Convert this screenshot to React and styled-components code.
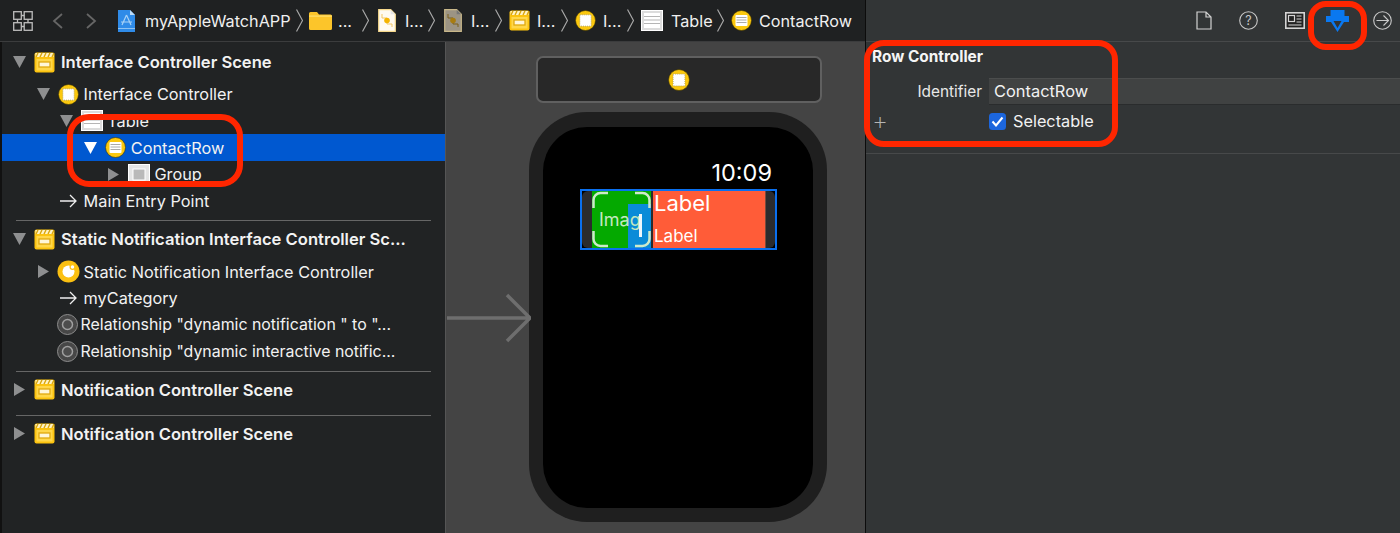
import React from "react";
import styled, { createGlobalStyle } from "styled-components";

const Global = createGlobalStyle`
  html, body { margin: 0; padding: 0; background: #1f2122; }
  * { box-sizing: border-box; }
  body { font-family: Inter, "Liberation Sans", sans-serif; color: #f2f2f2; -webkit-font-smoothing: antialiased; }
`;

const Page = styled.div`
  position: relative;
  width: 1400px;
  height: 533px;
  overflow: hidden;
  display: flex;
`;
const Editor = styled.div`
  width: 865px;
  display: flex;
  flex-direction: column;
`;
const Crumbs = styled.div`
  height: 42px;
  flex: none;
  display: flex;
  align-items: center;
  padding-left: 13px;
  background: #1f2122;
  border-bottom: 1px solid #3b3c3d;
`;
const CrumbSlot = styled.div`
  flex: none;
  display: flex;
  align-items: center;
  margin-left: ${(p) => p.$ml || 0}px;
`;
const CrumbLabel = styled.span`
  flex: none;
  display: block;
  width: ${(p) => p.$w}px;
  font-size: 16.2px;
  white-space: nowrap;
  color: #f0f0f0;
`;
const Main = styled.div`
  flex: 1;
  display: flex;
  min-height: 0;
`;
const Outline = styled.div`
  width: 446px;
  flex: none;
  background: #212324;
  border-left: 2px solid #111;
  border-right: 1px solid #555;
  padding-top: 7px;
`;
const Section = styled.div`
  padding-bottom: 6px;
`;
const Sep = styled.div`
  height: 1px;
  margin: 0 14px 5px 14px;
  background: #666;
`;
const Row = styled.div`
  height: ${(p) => (p.$scene ? 26 : 26.67)}px;
  margin-bottom: ${(p) => (p.$scene ? 6 : 0)}px;
  display: flex;
  align-items: center;
  padding-left: ${(p) => 11 + 23.6 * p.$level}px;
  background: ${(p) => (p.$selected ? "#0058d0" : "transparent")};
`;
const Disclosure = styled.div`
  width: 21px;
  flex: none;
  display: flex;
  align-items: center;
`;
const IconSlot = styled.div`
  width: 21px;
  height: 21px;
  flex: none;
  display: flex;
  align-items: center;
  justify-content: center;
  margin-left: ${(p) => p.$shift || 0}px;
  & > svg { flex: none; }
`;
const RowLabel = styled.span`
  margin-left: ${(p) => p.$gap ?? 6}px;
  font-size: ${(p) => (p.$scene ? 16.6 : p.$tight ? 15.9 : 16.3)}px;
  font-weight: ${(p) => (p.$scene ? 600 : 400)};
  white-space: nowrap;
  color: #f2f2f2;
`;
const Canvas = styled.div`
  position: relative;
  flex: 1;
  background: #444444;
  padding: 14px 0 0 90px;
`;
const SceneBar = styled.div`
  width: 286px;
  height: 47px;
  background: #282828;
  border: 2px solid #606060;
  border-radius: 7px;
  display: flex;
  align-items: center;
  justify-content: center;
`;
const Watch = styled.div`
  width: 298px;
  height: 410px;
  margin: 9px 0 0 -7px;
  padding: 15px 14px 14px;
  background: #1f1f1f;
  border-radius: 58px;
`;
const Screen = styled.div`
  height: 100%;
  background: #000;
  border-radius: 44px;
  padding-top: 32px;
  display: flex;
  flex-direction: column;
`;
const Time = styled.div`
  height: 28px;
  line-height: 28px;
  text-align: right;
  padding-right: 41px;
  font-size: 23.5px;
  font-weight: 400;
  color: #fff;
`;
const TableRow = styled.div`
  width: 197px;
  height: 61px;
  margin: 2px 0 0 37px;
  border: 2px solid #0a70f0;
`;
const RowGroup = styled.div`
  height: 100%;
  background: #2b2b2d;
  border-radius: 6px;
  display: flex;
  padding-left: 10px;
  gap: 2px;
`;
const ImageBox = styled.div`
  position: relative;
  width: 59px;
  height: 100%;
  background: #04a900;
  overflow: hidden;
  display: flex;
  align-items: center;
  padding-left: 7px;
`;
const ImageText = styled.span`
  position: relative;
  z-index: 2;
  font-size: 18px;
  color: #c4e8c0;
  white-space: nowrap;
`;
const Badge = styled.div`
  position: absolute;
  right: 0;
  bottom: 0;
  width: 23px;
  height: 44px;
  background: #0a8bd8;
`;
const Beam = styled.div`
  position: absolute;
  z-index: 3;
  right: 9px;
  top: 23px;
  width: 3px;
  height: 23px;
  background: #eef6fb;
`;
const Brackets = styled.svg`
  position: absolute;
  z-index: 4;
  inset: 0;
`;
const LabelBox = styled.div`
  width: 113px;
  height: 100%;
  background: #ff5c38;
  border-right: 1px solid #7a4a3c;
  display: flex;
  flex-direction: column;
  justify-content: space-between;
  padding-left: 1px;
`;
const BigLabel = styled.span`
  font-size: 22px;
  line-height: 25px;
  color: #fff;
`;
const SmallLabel = styled.span`
  font-size: 17px;
  line-height: 24px;
  color: #fff;
`;
const EntryArrow = styled.svg`
  position: absolute;
  left: 1px;
  top: 251px;
`;
const Inspector = styled.div`
  flex: 1;
  background: #323536;
  border-left: 1px solid #0c0c0c;
`;
const TabBar = styled.div`
  height: 42px;
  display: flex;
  align-items: center;
  justify-content: flex-end;
  padding-right: 8px;
  border-bottom: 1px solid #47494a;
`;
const Tab = styled.div`
  display: flex;
  margin-left: ${(p) => p.$ml}px;
`;
const InspectorSection = styled.div`
  height: 112px;
  border-bottom: 1px solid #47494a;
`;
const SectionTitle = styled.div`
  font-size: 15.4px;
  font-weight: 700;
  padding: 6px 0 0 6px;
  height: 36px;
  line-height: 17px;
  color: #f5f5f5;
`;
const FieldRow = styled.div`
  display: flex;
  align-items: center;
  height: 27px;
`;
const FieldLabel = styled.div`
  width: 116px;
  text-align: right;
  font-size: 15.4px;
  color: #e8e8e8;
`;
const FieldInput = styled.div`
  flex: 1;
  height: 27px;
  margin-left: 7px;
  background: #404242;
  border-top: 1px solid #4b4d4d;
  border-bottom: 1px solid #2a2c2d;
  padding-left: 5px;
  line-height: 25px;
  font-size: 16.4px;
  color: #f2f2f2;
`;
const CheckRow = styled.div`
  display: flex;
  align-items: center;
  height: 32px;
  padding-left: 6px;
`;
const Plus = styled.span`
  width: 117px;
  font-size: 25px;
  font-weight: 200;
  line-height: 20px;
  color: #b5b5b5;
`;
const Check = styled.div`
  width: 17px;
  height: 17px;
  flex: none;
  border-radius: 3.5px;
  background: #1c66dd;
  display: flex;
  align-items: center;
  justify-content: center;
`;
const CheckLabel = styled.span`
  margin-left: 7px;
  font-size: 16.3px;
  color: #f2f2f2;
`;
const RedBox = styled.div`
  position: absolute;
  left: ${(p) => p.$x}px;
  top: ${(p) => p.$y}px;
  width: ${(p) => p.$w}px;
  height: ${(p) => p.$h}px;
  border: 6px solid #ff2600;
  border-radius: ${(p) => p.$r}px;
  pointer-events: none;
`;

const Tri = ({ down, color = "#8e8f90" }) =>
  down ? (
    <svg width="13" height="12" viewBox="0 0 13 12"><path d="M0 0h13L6.5 12z" fill={color} /></svg>
  ) : (
    <svg width="12" height="13" viewBox="0 0 12 13"><path d="M1 0l11 6.5L1 13z" fill={color} /></svg>
  );

const Clapper = ({ s = 21 }) => (
  <svg width={s} height={s} viewBox="0 0 21 21">
    <rect x=".5" y=".5" width="20" height="20" rx="2" fill="#fcc30f" />
    <rect x="1.5" y="1" width="18" height="4" fill="#fff3c4" />
    <path d="M2 5l2-4M6 5l2-4M10 5l2-4M14 5l2-4M18 5l2-4" stroke="#d9a50c" strokeWidth="1.4" />
    <rect x="2.5" y="7" width="16" height="11.5" fill="#ffd74a" />
    <rect x="5" y="10" width="11" height="5" fill="#fff6d8" stroke="#e0a90e" strokeWidth="1.3" />
  </svg>
);
const Chip = ({ s = 21 }) => (
  <svg width={s} height={s} viewBox="0 0 21 21">
    <circle cx="10.5" cy="10.5" r="10" fill="#fbc80e" stroke="#3a3000" strokeWidth=".6" />
    <rect x="4.8" y="4.8" width="11.4" height="11.4" fill="#fff" stroke="#b9a65a" strokeWidth="1" strokeDasharray="1 1" />
  </svg>
);
const RowBadge = ({ s = 21 }) => (
  <svg width={s} height={s} viewBox="0 0 21 21">
    <circle cx="10.5" cy="10.5" r="10" fill="#fbc80e" stroke="#3a3000" strokeWidth=".6" />
    <rect x="4.5" y="5" width="12" height="11" rx="1" fill="#fff" />
    <path d="M5.5 7.5h10M5.5 10h10M5.5 12.5h10" stroke="#aaa" strokeWidth="1" />
  </svg>
);
const TableIcon = () => (
  <svg width="22" height="21" viewBox="0 0 22 21">
    <rect x=".5" y=".5" width="21" height="20" fill="#dcdcdc" stroke="#fff" />
    <rect x="3" y="3" width="16" height="15" fill="#fff" />
    <path d="M3 6.5h16M3 10h16M3 13.5h16" stroke="#b5b5b5" strokeWidth="1.2" />
  </svg>
);
const GroupIcon = () => (
  <svg width="22" height="21" viewBox="0 0 22 21">
    <rect x=".5" y=".5" width="21" height="20" fill="#e4e4e4" stroke="#fff" />
    <rect x="5" y="5" width="12" height="11" fill="#b9b9b9" stroke="#fff" />
  </svg>
);
const Relationship = () => (
  <svg width="21" height="21" viewBox="0 0 21 21">
    <circle cx="10.5" cy="10.5" r="10" fill="#474747" stroke="#8c8c8c" strokeWidth="1" />
    <circle cx="10.5" cy="10.5" r="5" fill="#4d4d4d" stroke="#a0a0a0" strokeWidth="1.5" />
  </svg>
);
const Notify = () => (
  <svg width="23" height="23" viewBox="0 0 23 23">
    <circle cx="11.5" cy="11.5" r="11" fill="#fbc011" />
    <circle cx="11.5" cy="11.5" r="6" fill="#fff" />
    <circle cx="15.5" cy="7" r="2.4" fill="#fff" stroke="#fbc011" strokeWidth="1.2" />
  </svg>
);
const Arrow = () => (
  <svg width="17" height="14" viewBox="0 0 17 14" fill="none" stroke="#eee" strokeWidth="1.3">
    <path d="M0 7h16M10 1l6 6-6 6" />
  </svg>
);
const Chev = () => (
  <svg width="7" height="23" viewBox="0 0 7 23" fill="none" stroke="#a9a9a9" strokeWidth="1.2">
    <path d="M.5 .5L6.5 11.5.5 22.5" />
  </svg>
);
const GridIcon = () => (
  <svg width="20" height="20" viewBox="0 0 20 20" fill="none" stroke="#bdbdbd" strokeWidth="1.3">
    <rect x=".7" y=".7" width="7.6" height="7.6" />
    <rect x="11.2" y=".7" width="8" height="7.6" />
    <rect x=".7" y="11.7" width="7.6" height="7.6" />
    <rect x="11.2" y="11.7" width="8" height="7.6" />
    <path d="M8.3 4.5h3M4.5 8.3v3.4M15 8.3v3.4M8.3 15.5h3" />
  </svg>
);
const NavChev = ({ left }) => (
  <svg width="11" height="16" viewBox="0 0 11 16" fill="none" stroke="#666" strokeWidth="1.8">
    <path d={left ? "M10 1L2 8l8 7" : "M1 1l8 7-8 7"} />
  </svg>
);
const AppDoc = () => (
  <svg width="17" height="22" viewBox="0 0 17 22">
    <path d="M0 0h12l5 5v17H0z" fill="#2f8be8" />
    <path d="M12 0l5 5h-5z" fill="#bcdcf8" />
    <path d="M8.5 5L4 15M8.5 5l4.5 10M3 12h11" stroke="#a8d2f6" strokeWidth="1.2" fill="none" />
    <rect x="0" y="18" width="17" height="1" fill="#8fc3f2" />
  </svg>
);
const Folder = () => (
  <svg width="23" height="18" viewBox="0 0 23 18">
    <path d="M0 1.5A1.5 1.5 0 0 1 1.5 0H8l2 2.5h11.5A1.5 1.5 0 0 1 23 4v12.5a1.5 1.5 0 0 1-1.5 1.5h-20A1.5 1.5 0 0 1 0 16.5z" fill="#fcc52a" />
    <rect y="3.5" width="23" height="1.2" fill="#ffe070" />
  </svg>
);
const Storyboard = ({ muted }) => (
  <svg width="18" height="23" viewBox="0 0 18 23">
    <path d="M.7 .7h12l4.6 4.6v17H.7z" fill={muted ? "#9c9484" : "#fffaf0"} stroke={muted ? "#c9b88a" : "#f6d98c"} strokeWidth="1.2" />
    <path d="M12.7 .7l4.6 4.6h-4.6z" fill={muted ? "#777" : "#e6e6e6"} />
    <path d="M4 5v4h5v6h5v3" stroke={muted ? "#7a5f18" : "#f2c766"} strokeWidth="1" fill="none" />
    <circle cx="9" cy="11.5" r="2.8" fill={muted ? "#a87c10" : "#f5b400"} />
  </svg>
);
const DocTab = () => (
  <svg width="16" height="19" viewBox="0 0 16 19" fill="none" stroke="#d2d2d2" strokeWidth="1.2">
    <path d="M1 1h9l5 5v12H1zM10 1v5h5" />
  </svg>
);
const HelpTab = () => (
  <svg width="19" height="19" viewBox="0 0 19 19" fill="none">
    <circle cx="9.5" cy="9.5" r="8.8" stroke="#c9c9c9" strokeWidth="1.1" />
    <text x="9.5" y="14" textAnchor="middle" fontSize="12.5" fill="#c9c9c9" fontFamily="Inter, sans-serif">?</text>
  </svg>
);
const AttrTab = () => (
  <svg width="20" height="17" viewBox="0 0 20 17" fill="none">
    <rect x=".8" y=".8" width="18.4" height="15.4" fill="#222" stroke="#d4d4d4" strokeWidth="1.6" />
    <rect x="3.5" y="3.5" width="6" height="6" stroke="#d4d4d4" strokeWidth="1.2" />
    <path d="M11.5 4h5M11.5 7h5M11.5 10h5M3.5 13h13" stroke="#d4d4d4" strokeWidth="1.2" />
  </svg>
);
const PinTab = () => (
  <svg width="23" height="22" viewBox="0 0 23 22">
    <path fillRule="evenodd" d="M4.5 0h14v6H23v6h-5L11.5 22 5 12H0V6h4.5zM7.5 11h8L11.5 18z" fill="#0a78f0" />
  </svg>
);
const GoTab = () => (
  <svg width="19" height="19" viewBox="0 0 19 19" fill="none" stroke="#c9c9c9" strokeWidth="1.1">
    <circle cx="9.5" cy="9.5" r="8.8" />
    <path d="M3.5 9.5h12M10.5 4.5l5 5-5 5" />
  </svg>
);

const crumbs = [
  { ml: 0, node: <GridIcon /> },
  { ml: 19, node: <NavChev left /> },
  { ml: 23, node: <NavChev /> },
  { ml: 21, node: <AppDoc /> },
  { ml: 10, label: "myAppleWatchAPP", w: 146 },
  { ml: 5, node: <Chev /> },
  { ml: 6, node: <Folder /> },
  { ml: 6, label: "...", w: 13 },
  { ml: 11, node: <Chev /> },
  { ml: 9, node: <Storyboard /> },
  { ml: 9, label: "I...", w: 16 },
  { ml: 7, node: <Chev /> },
  { ml: 9, node: <Storyboard muted /> },
  { ml: 9, label: "I...", w: 16 },
  { ml: 8, node: <Chev /> },
  { ml: 7, node: <Clapper /> },
  { ml: 7, label: "I...", w: 16 },
  { ml: 8, node: <Chev /> },
  { ml: 7, node: <Chip /> },
  { ml: 7, label: "I...", w: 17 },
  { ml: 7, node: <Chev /> },
  { ml: 7, node: <TableIcon /> },
  { ml: 8, label: "Table", w: 40 },
  { ml: 6, node: <Chev /> },
  { ml: 7, node: <RowBadge /> },
  { ml: 7, label: "ContactRow", w: 94 },
];

const TreeRow = ({ level, tri, triColor, icon, label, scene, selected, gap, tight, shift }) => (
  <Row $level={level} $scene={scene} $selected={selected}>
    <Disclosure>{tri && <Tri down={tri === "down"} color={triColor} />}</Disclosure>
    <IconSlot $shift={shift}>{icon}</IconSlot>
    <RowLabel $scene={scene} $gap={gap} $tight={tight}>{label}</RowLabel>
  </Row>
);

export default function App() {
  return (
    <Page>
      <Global />
      <Editor>
        <Crumbs>
          {crumbs.map((c, i) => (
            <CrumbSlot key={i} $ml={c.ml}>
              {c.label ? <CrumbLabel $w={c.w}>{c.label}</CrumbLabel> : c.node}
            </CrumbSlot>
          ))}
        </Crumbs>
        <Main>
          <Outline>
            <Section>
              <TreeRow level={0} scene tri="down" icon={<Clapper />} label="Interface Controller Scene" />
              <TreeRow level={1} tri="down" icon={<Chip />} label="Interface Controller" gap={5} />
              <TreeRow level={2} tri="down" icon={<TableIcon />} label="Table" gap={5} />
              <TreeRow level={3} tri="down" triColor="#fff" icon={<RowBadge />} label="ContactRow" selected gap={5} />
              <TreeRow level={4} tri="right" icon={<GroupIcon />} label="Group" gap={5} />
              <TreeRow level={1} icon={<Arrow />} label="Main Entry Point" gap={5} />
            </Section>
            <Sep />
            <Section>
              <TreeRow level={0} scene tri="down" icon={<Clapper />} label="Static Notification Interface Controller Sc..." />
              <TreeRow level={1} tri="right" icon={<Notify />} label="Static Notification Interface Controller" gap={5} />
              <TreeRow level={1} icon={<Arrow />} label="myCategory" gap={5} />
              <TreeRow level={1} icon={<Relationship />} label={'Relationship "dynamic notification " to "...'} gap={3} tight shift={-1} />
              <TreeRow level={1} icon={<Relationship />} label={'Relationship "dynamic interactive notific...'} gap={3} tight shift={-1} />
            </Section>
            <Sep />
            <Section>
              <TreeRow level={0} scene tri="right" icon={<Clapper />} label="Notification Controller Scene" />
            </Section>
            <Sep />
            <Section>
              <TreeRow level={0} scene tri="right" icon={<Clapper />} label="Notification Controller Scene" />
            </Section>
          </Outline>
          <Canvas>
            <SceneBar><Chip s={22} /></SceneBar>
            <Watch>
              <Screen>
                <Time>10:09</Time>
                <TableRow>
                  <RowGroup>
                    <ImageBox>
                      <ImageText>Imag</ImageText>
                      <Badge />
                      <Beam />
                      <Brackets width="59" height="57" viewBox="0 0 59 57" fill="none" stroke="#cdeacb" strokeWidth="2.5">
                        <path d="M1.5 17V9a7 7 0 0 1 7-7H16M43 2h7.5a7 7 0 0 1 7 7v8M1.5 40v8a7 7 0 0 0 7 7H16M43 55h7.5a7 7 0 0 0 7-7v-8" />
                      </Brackets>
                    </ImageBox>
                    <LabelBox>
                      <BigLabel>Label</BigLabel>
                      <SmallLabel>Label</SmallLabel>
                    </LabelBox>
                  </RowGroup>
                </TableRow>
              </Screen>
            </Watch>
            <EntryArrow width="84" height="50" viewBox="0 0 84 50" fill="none" stroke="#6e6e6e" strokeWidth="3.5">
              <path d="M0 25h81M60 2l23 23-23 23" />
            </EntryArrow>
          </Canvas>
        </Main>
      </Editor>
      <Inspector>
        <TabBar>
          <Tab $ml={0}><DocTab /></Tab>
          <Tab $ml={27}><HelpTab /></Tab>
          <Tab $ml={27}><AttrTab /></Tab>
          <Tab $ml={21}><PinTab /></Tab>
          <Tab $ml={24}><GoTab /></Tab>
        </TabBar>
        <InspectorSection>
          <SectionTitle>Row Controller</SectionTitle>
          <FieldRow>
            <FieldLabel>Identifier</FieldLabel>
            <FieldInput>ContactRow</FieldInput>
          </FieldRow>
          <CheckRow>
            <Plus>+</Plus>
            <Check>
              <svg width="13" height="11" viewBox="0 0 13 11" fill="none" stroke="#fff" strokeWidth="2">
                <path d="M1.5 5.5L5 9.5l6.5-8" />
              </svg>
            </Check>
            <CheckLabel>Selectable</CheckLabel>
          </CheckRow>
        </InspectorSection>
      </Inspector>
      <RedBox $x={67} $y={114} $w={176} $h={73} $r={22} />
      <RedBox $x={864} $y={40} $w={254} $h={107} $r={20} />
      <RedBox $x={1308} $y={1} $w={59} $h={49} $r={18} />
    </Page>
  );
}
